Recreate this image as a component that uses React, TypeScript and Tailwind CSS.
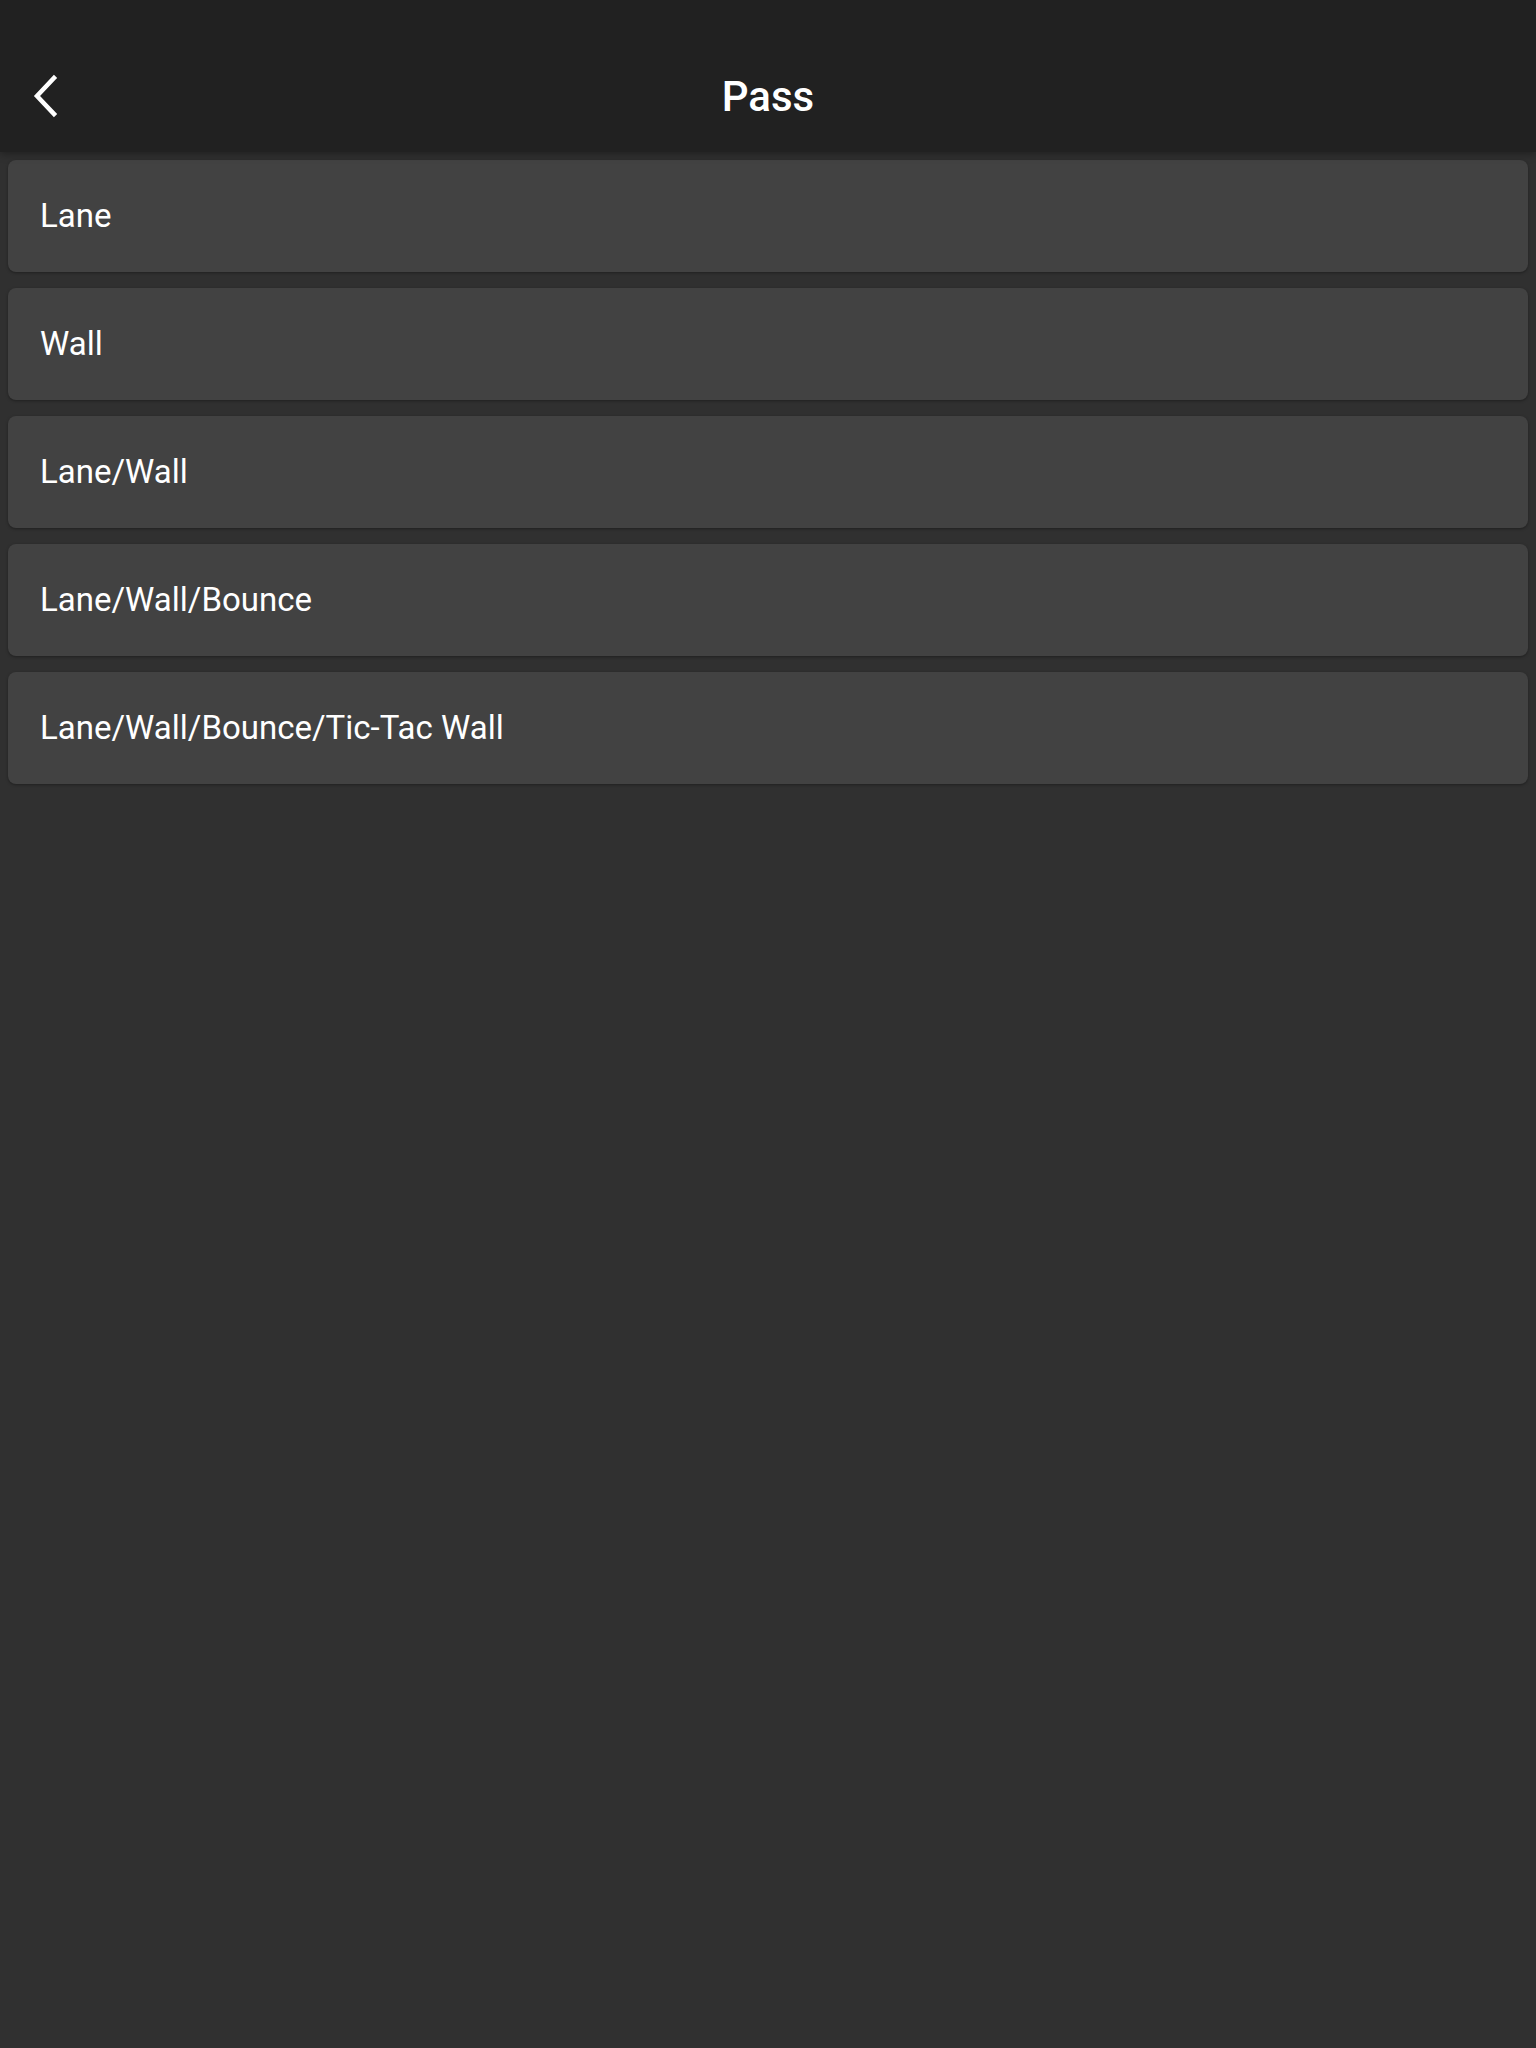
import React from 'react';

const items = ['Lane', 'Wall', 'Lane/Wall', 'Lane/Wall/Bounce', 'Lane/Wall/Bounce/Tic-Tac Wall'];

export default function App() {
  return (
    <div className="min-h-[2048px] bg-[#303030] font-['Roboto',sans-serif] text-white">
      <header className="relative flex h-[152px] items-end justify-center bg-[#212121] pb-[31px] shadow-[0_2px_8px_rgba(0,0,0,0.35)]">
        <button className="absolute left-[26px] top-[70px] flex h-[52px] w-[36px] items-center justify-center">
          <svg width="28" height="44" viewBox="0 0 28 44" fill="none">
            <path d="M24 4 L7 22 L24 40" stroke="white" strokeWidth="4.5" strokeLinecap="square" />
          </svg>
        </button>
        <h1 className="text-[42px] leading-[48px] font-medium">Pass</h1>
      </header>

      <ul className="flex flex-col gap-4 px-2 pt-2">
        {items.map((item) => (
          <li
            key={item}
            className="flex h-[112px] items-center rounded-lg bg-[#424242] px-8 shadow-[0_1px_3px_rgba(0,0,0,0.35)]"
          >
            <span className="text-[33px] leading-[40px]">{item}</span>
          </li>
        ))}
      </ul>
    </div>
  );
}
